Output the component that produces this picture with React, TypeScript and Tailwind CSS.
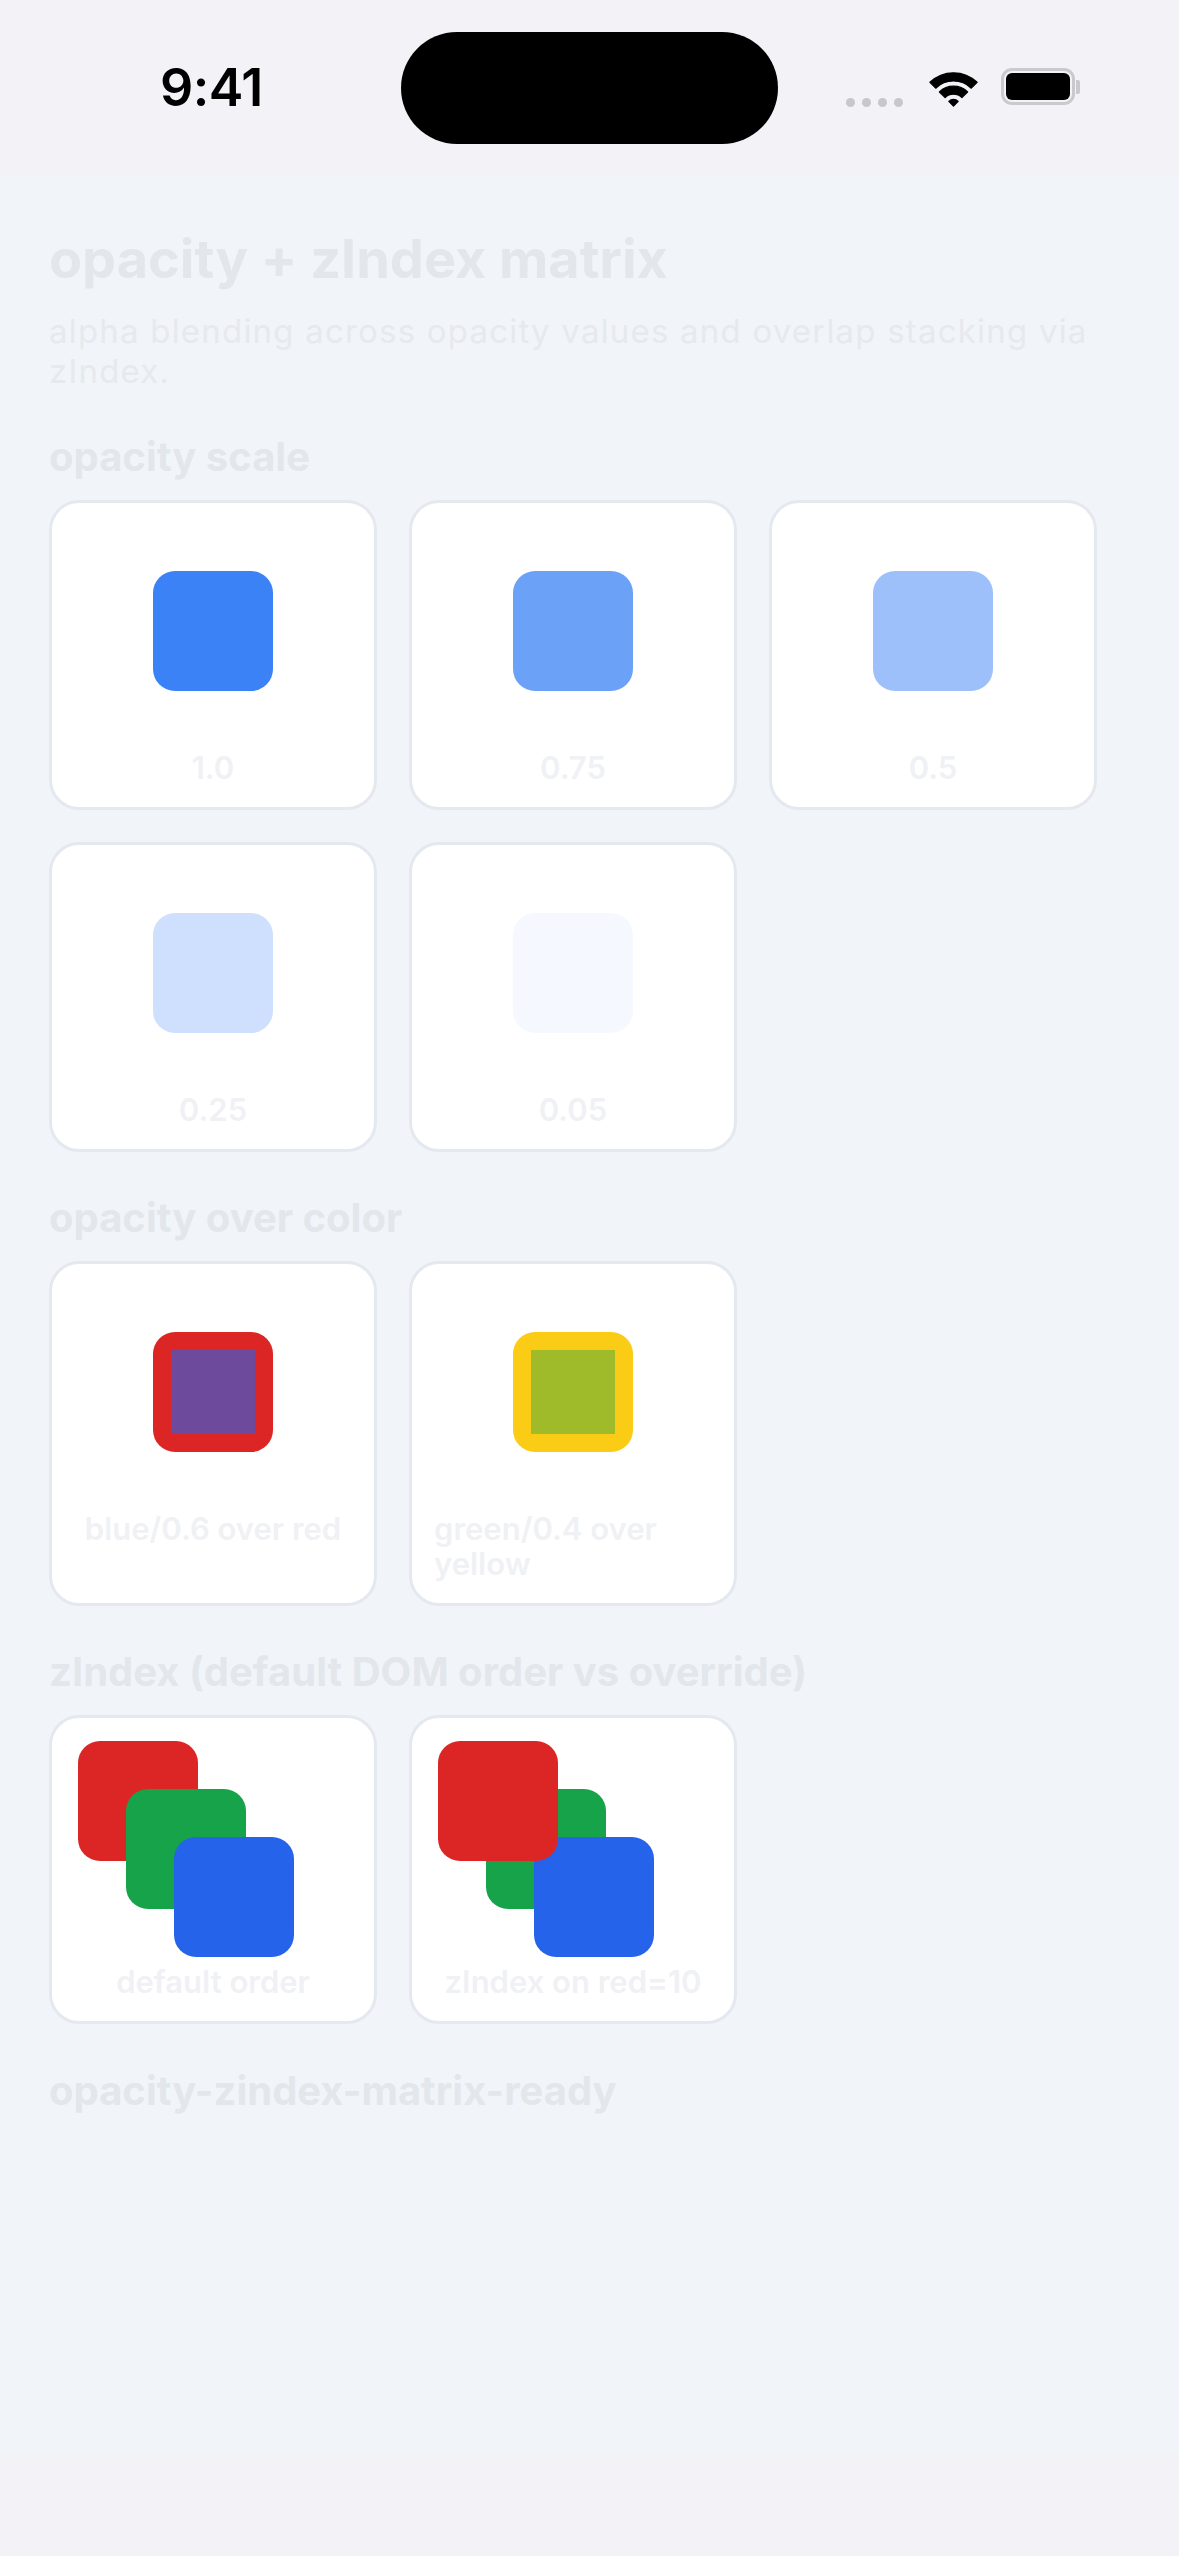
import React from "react";

const FONT = { fontFamily: "Inter, 'Liberation Sans', sans-serif" };

function Wifi() {
  return (
    <svg width="49" height="37" viewBox="0 0 49 37">
      <g fill="#000" stroke="#000" strokeWidth="1.2" strokeLinejoin="round">
        <path d="M0.9 11.3 A34 34 0 0 1 48.1 11.3 L42.3 17.2 A25.5 25.5 0 0 0 6.7 17.2 Z" />
        <path d="M10.4 21 A20 20 0 0 1 38.6 21 L32.9 26.6 A12 12 0 0 0 16.1 26.6 Z" />
        <path d="M19.8 30.4 A6.6 6.6 0 0 1 29.2 30.4 L24.5 35.2 Z" />
      </g>
    </svg>
  );
}

function StatusBar() {
  return (
    <div className="h-[176px] bg-[#f2f2f7] flex items-center shrink-0">
      <div className="w-[401px] pl-[160px]">
        <span className="text-[52px] font-semibold text-black leading-none tracking-[-0.5px]" style={FONT}>
          9:41
        </span>
      </div>
      <div className="w-[377px] h-[112px] rounded-full bg-black" />
      <div className="flex items-center ml-[68px]">
        <div className="flex gap-[7px] mt-[28px]">
          <div className="w-[9px] h-[9px] rounded-full bg-[#c7c7cc]" />
          <div className="w-[9px] h-[9px] rounded-full bg-[#c7c7cc]" />
          <div className="w-[9px] h-[9px] rounded-full bg-[#c7c7cc]" />
          <div className="w-[9px] h-[9px] rounded-full bg-[#c7c7cc]" />
        </div>
        <div className="ml-[26px] mt-[2px]">
          <Wifi />
        </div>
        <div className="ml-[23px] flex items-center -mt-[3px]">
          <div className="w-[74px] h-[37px] rounded-[11px] border-[3px] border-[#c9c9ce] p-[2px]">
            <div className="w-full h-full rounded-[6px] bg-black" />
          </div>
          <div className="w-[4px] h-[14px] rounded-r-[2px] bg-[#c9c9ce] ml-[1px]" />
        </div>
      </div>
    </div>
  );
}

function Card({ children, label, top = "pt-[68px]", gap = "mt-[59px]" }: { children: React.ReactNode; label: string; top?: string; gap?: string }) {
  return (
    <div className={`w-[328px] bg-white border-[3px] border-[#e4e9f0] rounded-[30px] px-[22px] pb-[22px] flex flex-col items-center ${top}`}>
      {children}
      <div className={`${gap} text-[31px] leading-[35px] font-semibold text-[#eff1f4] text-left`} style={FONT}>
        {label}
      </div>
    </div>
  );
}

function Heading({ children }: { children: React.ReactNode }) {
  return (
    <div className="mt-[42px] mb-[19px] text-[40px] leading-[48px] font-bold text-[#e3e7ec]" style={FONT}>
      {children}
    </div>
  );
}

function Row({ children }: { children: React.ReactNode }) {
  return <div className="flex flex-wrap gap-[32px]">{children}</div>;
}

function Stack({ redTop }: { redTop: boolean }) {
  return (
    <div className="relative w-[216px] h-[216px] self-start ml-[4px]">
      <div className={`absolute left-0 top-0 w-[120px] h-[120px] rounded-[22px] bg-[#dc2626] ${redTop ? "z-10" : ""}`} />
      <div className="absolute left-[48px] top-[48px] w-[120px] h-[120px] rounded-[22px] bg-[#16a34a]" />
      <div className="absolute left-[96px] top-[96px] w-[120px] h-[120px] rounded-[22px] bg-[#2563eb]" />
    </div>
  );
}

export default function App() {
  const opacities: { label: string; cls: string }[] = [
    { label: "1.0", cls: "opacity-100" },
    { label: "0.75", cls: "opacity-75" },
    { label: "0.5", cls: "opacity-50" },
    { label: "0.25", cls: "opacity-25" },
    { label: "0.05", cls: "opacity-5" },
  ];
  return (
    <div className="w-[1179px] h-[2556px] flex flex-col bg-[#f1f5f9]" style={FONT}>
      <StatusBar />
      <div className="flex-1 bg-[#f1f5f9] px-[49px] pt-[51px]">
        <div className="text-[54px] leading-[64px] font-bold text-[#e3e6eb]" style={FONT}>
          opacity + zIndex matrix
        </div>
        <div className="mt-[20px] text-[33px] leading-[40px] tracking-[1.2px] text-[#e6e9ee]" style={FONT}>
          alpha blending across opacity values and overlap stacking via zIndex.
        </div>

        <Heading>opacity scale</Heading>
        <Row>
          {opacities.map((o) => (
            <Card key={o.label} label={o.label}>
              <div className={`w-[120px] h-[120px] rounded-[22px] bg-[#3b82f6] ${o.cls}`} />
            </Card>
          ))}
        </Row>

        <Heading>opacity over color</Heading>
        <Row>
          <Card label="blue/0.6 over red">
            <div className="w-[120px] h-[120px] rounded-[22px] bg-[#dc2626] p-[18px]">
              <div className="w-full h-full bg-[#2563eb]/60" />
            </div>
          </Card>
          <Card label="green/0.4 over yellow">
            <div className="w-[120px] h-[120px] rounded-[22px] bg-[#facc15] p-[18px]">
              <div className="w-full h-full bg-[#16a34a]/40" />
            </div>
          </Card>
        </Row>

        <Heading>zIndex (default DOM order vs override)</Heading>
        <Row>
          <Card label="default order" top="pt-[23px]" gap="mt-[7px]">
            <Stack redTop={false} />
          </Card>
          <Card label="zIndex on red=10" top="pt-[23px]" gap="mt-[7px]">
            <Stack redTop={true} />
          </Card>
        </Row>

        <div className="mt-[43px] text-[40px] leading-[48px] font-bold text-[#e3e7ec]" style={FONT}>
          opacity-zindex-matrix-ready
        </div>
      </div>
      <div className="h-[102px] bg-[#f2f2f7] shrink-0" />
    </div>
  );
}
